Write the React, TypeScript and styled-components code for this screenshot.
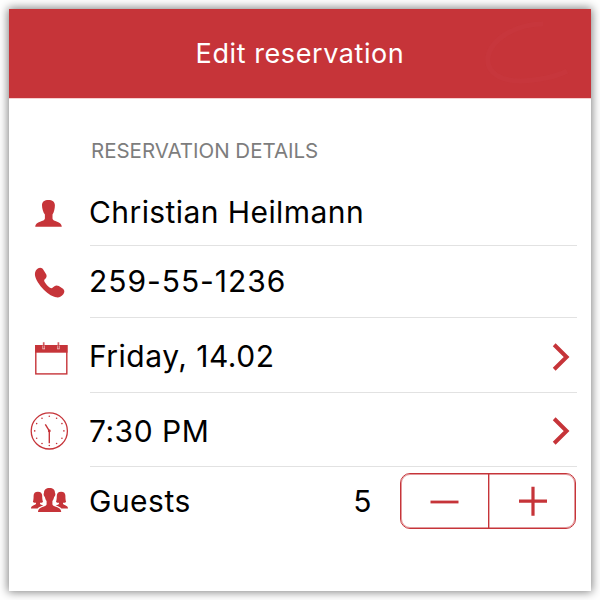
import React from "react";
import styled, { createGlobalStyle } from "styled-components";

const RED = "#c63439";

const GlobalStyle = createGlobalStyle`
  * { box-sizing: border-box; }
  html, body { margin: 0; padding: 0; background: #fff; overflow: hidden; }
  body { font-family: Inter, "Liberation Sans", sans-serif; color: #000; }
  svg { display: block; }
`;

const Page = styled.div`
  width: 600px;
  height: 600px;
  padding: 9px;
`;

const Card = styled.main`
  width: 582px;
  height: 582px;
  background: #fff;
  box-shadow: 0 0 9px 1px rgba(0, 0, 0, 0.5);
`;

const Header = styled.header`
  position: relative;
  height: 89px;
  display: flex;
  align-items: center;
  justify-content: center;
  background: ${RED};
  box-shadow: 0 1px 0 #f6cfd0;
`;

const Title = styled.h1`
  margin: 0;
  font-size: 27px;
  font-weight: 400;
  line-height: 34px;
  letter-spacing: 0.58px;
  color: #fff;
`;

const Swoosh = styled.svg`
  position: absolute;
  right: 18px;
  top: 8px;
`;

const SectionLabel = styled.h2`
  margin: 0;
  height: 76px;
  padding: 40px 0 0 82px;
  font-size: 20.5px;
  font-weight: 400;
  line-height: 26px;
  letter-spacing: -0.02px;
  color: #7d7d7d;
`;

const Row = styled.div<{ $height: number }>`
  height: ${(p) => p.$height}px;
  display: grid;
  grid-template-columns: 80px 1fr;
  padding-right: 14px;
`;

const IconCell = styled.div<{ $top: number }>`
  display: flex;
  align-items: center;
  justify-content: center;
  padding-top: ${(p) => p.$top}px;
  padding-bottom: 1px;
`;

const Content = styled.div<{ $top: number; $last?: boolean }>`
  display: flex;
  align-items: center;
  justify-content: space-between;
  margin-left: 1px;
  padding-top: ${(p) => p.$top}px;
  border-bottom: 1px solid ${(p) => (p.$last ? "transparent" : "#e2e2e2")};
`;

const Value = styled.span<{ $spacing?: number; $lift?: number }>`
  margin-left: -1px;
  padding-bottom: ${(p) => p.$lift ?? 0}px;
  font-size: 30px;
  line-height: 36px;
  letter-spacing: ${(p) => p.$spacing ?? 0.5}px;
  white-space: nowrap;
`;

const Count = styled(Value)`
  margin-left: auto;
  margin-right: 28px;
`;

const Chevron = styled.svg`
  margin-right: 7px;
`;

const Stepper = styled.div`
  width: 176px;
  height: 56px;
  margin-right: 1px;
  display: grid;
  grid-template-columns: 1fr 1fr;
  border: 1px solid ${RED};
  border-radius: 10px;
  box-shadow: inset 0 0 0 1px rgba(198, 52, 57, 0.5);
`;

const StepButton = styled.button`
  display: flex;
  align-items: center;
  justify-content: center;
  margin: 0;
  padding: 0;
  border: 0;
  background: transparent;
  & + & {
    border-left: 1px solid ${RED};
    box-shadow: inset 1px 0 0 rgba(198, 52, 57, 0.4);
    padding-left: 1px;
  }
`;

const Icon = ({ children }: { children: React.ReactNode }) => (
  <svg width="40" height="40" viewBox="0 0 40 40" fill={RED} aria-hidden="true">
    {children}
  </svg>
);

const PersonIcon = () => (
  <Icon>
    <path d="M19.4 7C15.6 7 13 8.8 13 12.3C13 15.3 14.2 19.6 15.9 21.6V25.4C15.9 28.7 6.2 28 6.2 33.7H32.8C32.8 28 23.5 28.7 23.5 25.4V21.6C25 19.6 25.9 15.3 25.9 12.3C25.9 8.8 23.2 7 19.4 7Z" />
  </Icon>
);

const PhoneIcon = () => (
  <Icon>
    <path d="M9.2 6.3C11.2 5 13.5 6 14.5 8L17.3 12.5C18.2 14.6 17.2 16 15.5 17.6C14.5 18.6 15.7 20.8 18 23.2C20.4 25.5 22.4 26.8 23.5 25.8C25.3 23.6 27.4 22.7 29.8 24L34 26.8C35.8 28.1 35.7 30.3 34.3 32.2C32.5 34.5 30.2 35.8 27 35.3C22.4 34.3 17.3 30.6 13.2 26C8.9 21.1 6 16.3 5.9 12C5.9 9.5 7.4 7.4 9.2 6.3Z" />
  </Icon>
);

const CalendarIcon = () => (
  <Icon>
    <rect x="6.8" y="8.7" width="31" height="28.2" fill="none" stroke={RED} strokeWidth="1.4" />
    <rect x="6.1" y="8" width="32.4" height="7.7" />
    <path d="M14.7 8.5V12.2M29.4 8.5V12.2" stroke="#fff" strokeWidth="2.6" opacity="0.75" />
    <path d="M14.7 5.2V11.4M29.4 5.2V11.4" stroke={RED} strokeWidth="1.7" opacity="0.8" />
  </Icon>
);

const ClockIcon = () => (
  <Icon>
    <circle cx="20.3" cy="19.9" r="18.1" fill="none" stroke={RED} strokeWidth="1.3" />
    {Array.from({ length: 12 }, (_, i) => {
      const a = (i * Math.PI) / 6;
      return (
        <circle key={i} cx={20.3 + 14.6 * Math.sin(a)} cy={19.9 - 14.6 * Math.cos(a)} r="0.8" />
      );
    })}
    <circle cx="20.3" cy="19.9" r="1.4" />
    <path d="M20.3 19.9L16.3 13.4M20.3 19.9V32.2" fill="none" stroke={RED} strokeWidth="1.4" />
  </Icon>
);

const sidePerson =
  "M8.9 10.7C6 10.7 4.6 12.3 4.6 14.8C4.6 17.2 4.5 19.2 3.9 20.9C4.8 21.5 5.9 21.7 7 21.8V22.8C6.4 24.5 2 24.2 2 27.4H8.6C9.6 25.9 12.2 25 14.2 24.4C12.8 23.8 11 23.4 11 22.4V21.8C12.2 21.7 13.2 21.5 14 20.9C13.4 19.2 13.2 17.2 13.2 14.8C13.2 12.3 11.7 10.7 8.9 10.7Z";

const GroupIcon = () => (
  <Icon>
    <path d={sidePerson} />
    <path d={sidePerson} transform="translate(41 0) scale(-1 1)" />
    <path
      stroke="#fff"
      strokeWidth="1.2"
      paintOrder="stroke"
      d="M20.5 7C17 7 15 8.8 15 12C14.2 12.9 14.8 15 15.8 15.8C16.2 17.7 16.8 19 17.6 20V23.3C17.6 26.3 9 25.2 9 31H32.2C32.2 25.2 23.4 26.3 23.4 23.3V20C24.2 19 24.8 17.7 25.2 15.8C26.2 15 26.8 12.9 26 12C26 8.8 24 7 20.5 7Z"
    />
  </Icon>
);

const ChevronIcon = () => (
  <Chevron width="18" height="30" viewBox="0 0 18 30" aria-hidden="true">
    <path d="M2.2 2.8L14.6 15L2.2 27.2" fill="none" stroke={RED} strokeWidth="4" />
  </Chevron>
);

export default function App() {
  return (
    <>
      <GlobalStyle />
      <Page>
        <Card>
          <Header>
            <Title>Edit reservation</Title>
            <Swoosh width="92" height="70" viewBox="0 0 92 70" aria-hidden="true">
              <path
                d="M62 7C35 7 10 22 7 40C5 56 20 64 40 64C58 63 75 60 86 54"
                fill="none"
                stroke="#c93d42"
                strokeWidth="5"
                opacity="0.35"
              />
            </Swoosh>
          </Header>
          <SectionLabel>RESERVATION DETAILS</SectionLabel>
          <Row $height={72}>
            <IconCell $top={7}><PersonIcon /></IconCell>
            <Content $top={7}><Value $spacing={0.42} $lift={2}>Christian Heilmann</Value></Content>
          </Row>
          <Row $height={72}>
            <IconCell $top={1}><PhoneIcon /></IconCell>
            <Content $top={1}><Value $spacing={0.95} $lift={2}>259-55-1236</Value></Content>
          </Row>
          <Row $height={75}>
            <IconCell $top={4}><CalendarIcon /></IconCell>
            <Content $top={4}><Value $lift={2}>Friday, 14.02</Value><ChevronIcon /></Content>
          </Row>
          <Row $height={74}>
            <IconCell $top={3}><ClockIcon /></IconCell>
            <Content $top={3}><Value>7:30 PM</Value><ChevronIcon /></Content>
          </Row>
          <Row $height={69}>
            <IconCell $top={0}><GroupIcon /></IconCell>
            <Content $top={0} $last>
              <Value>Guests</Value>
              <Count>5</Count>
              <Stepper>
                <StepButton aria-label="Remove guest">
                  <svg width="30" height="30" viewBox="0 0 30 30">
                    <path d="M0.5 16H28.5" stroke={RED} strokeWidth="2.8" />
                  </svg>
                </StepButton>
                <StepButton aria-label="Add guest">
                  <svg width="30" height="30" viewBox="0 0 30 30">
                    <path d="M1 15.2H29M15 0.7V29.7" stroke={RED} strokeWidth="3.2" />
                  </svg>
                </StepButton>
              </Stepper>
            </Content>
          </Row>
        </Card>
      </Page>
    </>
  );
}
